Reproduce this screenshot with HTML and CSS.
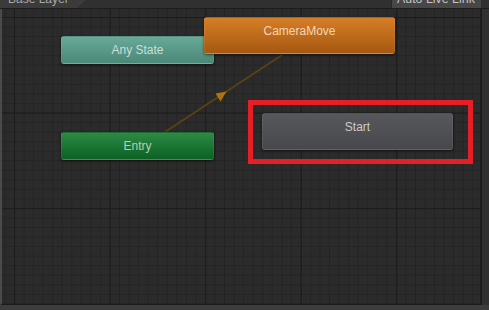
FILE: index.html
```html
<!DOCTYPE html>
<html lang="en">
<head>
    <meta charset="UTF-8">
    <meta name="viewport" content="width=device-width, initial-scale=1.0">
    <title>Animator</title>
    <link rel="stylesheet" href="styles.css">
</head>
<body>
    <div class="animator">
        <!-- Top bar -->
        <div class="toolbar">
            <div class="layer-tab"><span>Base Layer</span></div>
            <div class="live-link"><span>Auto Live Link</span></div>
        </div>

        <div class="main">
            <!-- Graph -->
            <div class="graph">
                <svg class="links" width="480" height="295" viewBox="2 9 480 295">
                    <line x1="165" y1="132" x2="282" y2="55" stroke="#5a4014" stroke-width="2"/>
                    <polygon points="226.5,91.5 215.5,93.5 220.5,101.5" fill="#ad730e"/>
                </svg>

                <div class="node node-any">Any State</div>
                <div class="node node-entry">Entry</div>
                <div class="node node-start">Start</div>
                <div class="node node-camera">CameraMove</div>

                <div class="highlight"></div>
            </div>
            <div class="side"></div>
        </div>
        <div class="bottom-bar"></div>
    </div>
</body>
</html>
```

FILE: styles.css
```css
/* Page */
body {
    margin: 0;
    padding: 0;
    background: #3c3c3c;
    font-family: "Liberation Sans", Arial, sans-serif;
    font-size: 12px;
    overflow: hidden;
}

.animator {
    width: 489px;
    height: 310px;
    display: flex;
    flex-direction: column;
}

/* Top bar */
.toolbar {
    height: 8px;
    display: flex;
    justify-content: space-between;
    background: #303030;
    border-bottom: 1px solid #1d1d1d;
    overflow: hidden;
}

.layer-tab {
    width: 86px;
    background: #3b3b3b;
    clip-path: polygon(0 0, 86px 0, 77px 100%, 0 100%);
}

.layer-tab span,
.live-link span {
    display: block;
    line-height: 12px;
    margin-top: -7px;
    white-space: nowrap;
}

.layer-tab span {
    padding-left: 8px;
    color: #a9a9a9;
}

.live-link {
    width: 84px;
    margin-right: 8px;
    padding-left: 5px;
    background: #474747;
    border-left: 1px solid #2a2a2a;
    color: #c3c3c3;
    font-size: 12.4px;
}

/* Main area */
.main {
    flex: 1;
    display: flex;
}

.graph {
    position: relative;
    flex: 1;
    border-left: 2px solid #4a4a4a;
    background-color: #2b2b2b;
    background-image:
        linear-gradient(90deg, #1c1c1c 1px, transparent 1px),
        linear-gradient(#1c1c1c 1px, transparent 1px),
        linear-gradient(90deg, #242424 1px, transparent 1px),
        linear-gradient(#242424 1px, transparent 1px);
    background-size: 95.6px 95.6px, 95.6px 95.6px, 9.56px 9.56px, 9.56px 9.56px;
    background-position: 12px 8px;
    border-bottom: 1px solid #1b1b1b;
    overflow: hidden;
}

.side {
    width: 7px;
    background: #303030;
    border-left: 2px solid #1c1c1c;
}

.bottom-bar {
    height: 5px;
    margin-left: 2px;
    margin-right: 7px;
    background: #3d3d3d;
}

.links {
    position: absolute;
    left: 0;
    top: 0;
}

/* State nodes */
.node {
    position: absolute;
    box-sizing: border-box;
    height: 28px;
    line-height: 27px;
    text-align: center;
    border-radius: 3px;
    border: 1px solid rgba(255, 255, 255, 0.07);
    box-shadow: 0 1px 3px rgba(0, 0, 0, 0.55);
}

.node-any {
    left: 59px;
    top: 27px;
    width: 153px;
    background: linear-gradient(#69a997, #4a8878);
    color: #c9ded7;
}

.node-entry {
    left: 59px;
    top: 123px;
    width: 153px;
    background: linear-gradient(#2d8a44, #0b6123);
    color: #aed2b6;
}

.node-start {
    left: 260px;
    top: 104px;
    width: 191px;
    height: 37px;
    background: linear-gradient(#56585c, #46484c);
    color: #cbcbcb;
}

.node-camera {
    left: 202px;
    top: 8px;
    width: 191px;
    height: 37px;
    background: linear-gradient(#d67e27, #a65810);
    color: #f2d6b9;
}

/* Red highlight frame */
.highlight {
    position: absolute;
    left: 246px;
    top: 91px;
    width: 225px;
    height: 64px;
    box-sizing: border-box;
    border: 5px solid #e61e26;
}
```
